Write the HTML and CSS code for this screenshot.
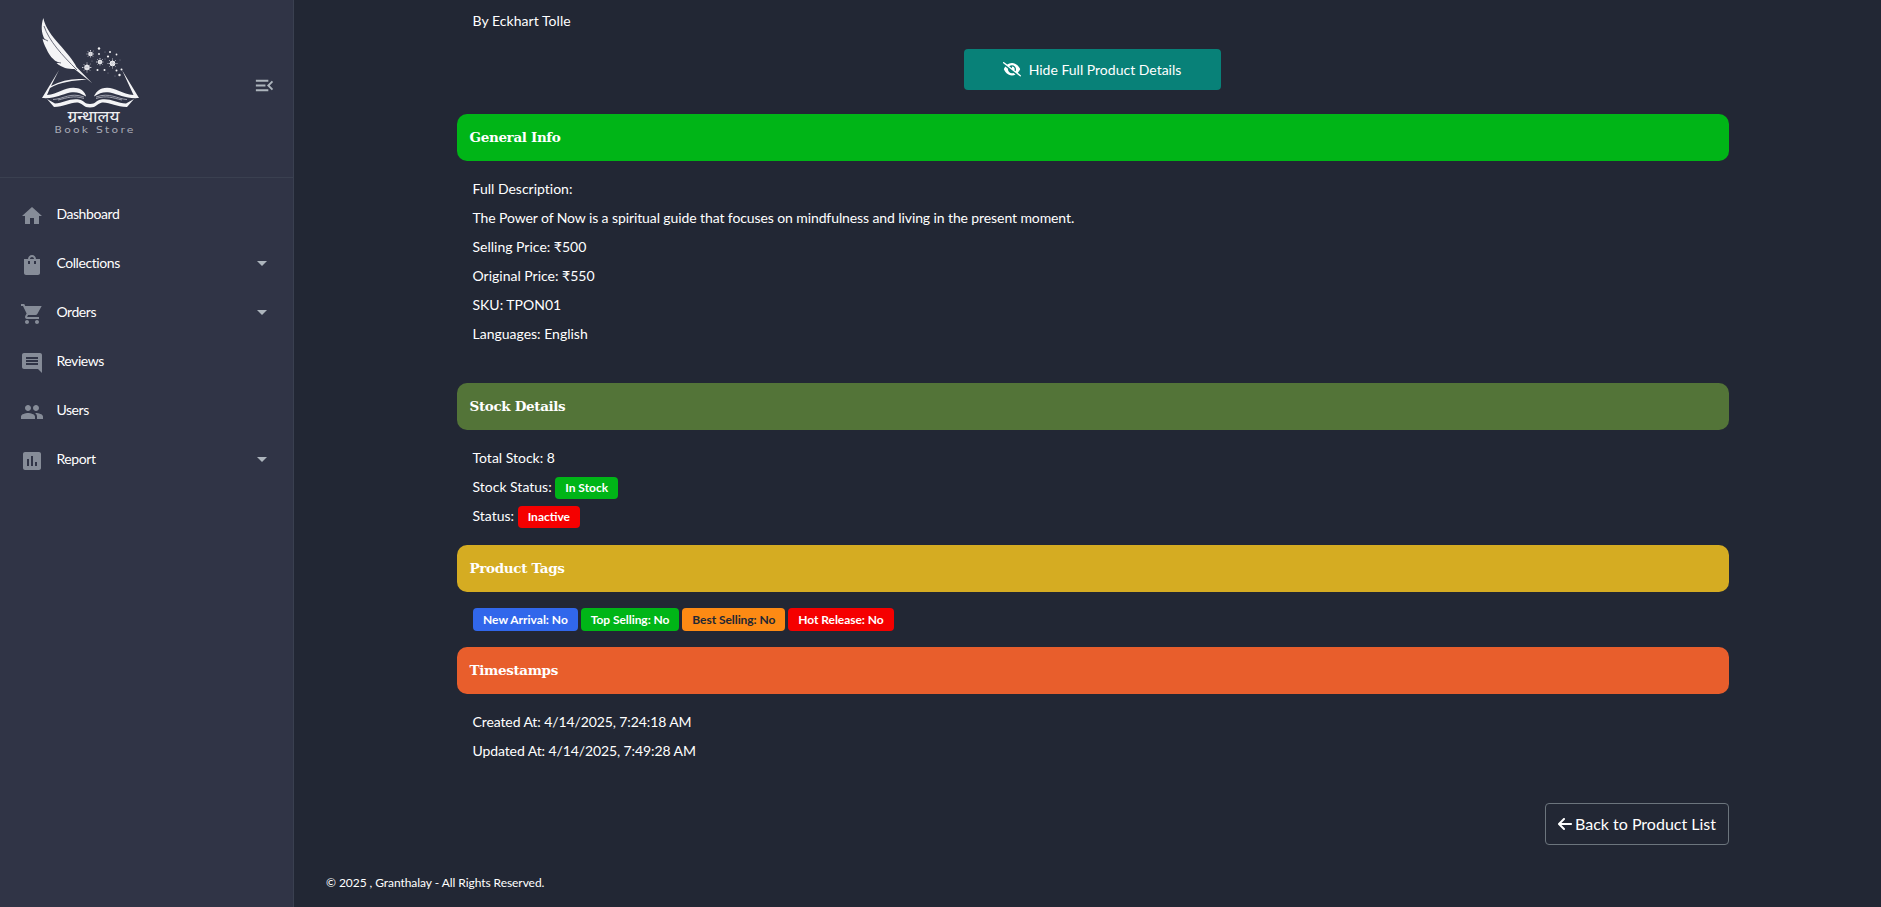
FILE: index.html
```html
<!DOCTYPE html>
<html lang="en">
<head>
<meta charset="utf-8">
<title>Granthalay - Product Details</title>
<link rel="stylesheet" href="styles.css">
</head>
<body>
<div class="app">
  <aside class="sidebar">
    <div class="brand">
      <svg class="logo" viewBox="30 10 120 130" width="120" height="130">
        <g fill="#f4f4f6">
          <path d="M43.3 18C45.5 28 52 36 59 44C67 53 73 60 76.500 67L92 83L74.500 69C68 69 62 68 56.500 63L59 63C53 60 49 55 46.500 49C44.500 45 43 42 42.500 38.500L45 40C41 33 41 25 43.300 18Z"/>
          <path d="M42 98L59 70L51 86C62 80 74 78 87 79.500C73 80.500 60 82 50 88L47 95C60 94 66 85 79 88.500C83 90 86 94 86 96.500C80 92.500 76 91.500 70 92.500C61 94.500 55 99 42 98Z"/>
          <path d="M139 98L122 70L133.500 95C120 94 113 85 102 88.500C97 90.500 95 94 94 96.500C100 92.500 104 91.500 110 92.500C119 94.500 126 99 139 98Z"/>
          <path d="M47 99L55 103.500C63 103 70 98 79 99.500C85 101 84 104 90 104C96 104 95 101 101 99.500C110 98 117 103 126 103.500L134 99L127 107C116 107 110 102 102 102.500C96 104 97 107.500 90 107.500C83 107.500 84 104 78 102.500C70 102 64 107 54 107Z"/>
        </g>
        <g fill="none" stroke="#b9bac5" stroke-width=".8">
          <path d="M53 99.500C64 99 70 92 84 97M58 100C67 98 73 95 84 98.500M127 99.500C117 99 110 92 96 97M122 100C113 98 107 95 96 98.500"/>
          <path stroke="#303446" stroke-width=".7" d="M44 26C49 41 62 55 77 70M42 38L48 41M56 62L61 63"/>
        </g>
        <g fill="#f4f4f6">
          <circle cx="90.500" cy="54" r="2.200"/><circle cx="87" cy="67.500" r="2.700"/><circle cx="100" cy="62" r="2.300"/><circle cx="112.500" cy="63.500" r="2.700"/>
          <circle cx="99" cy="48.500" r="1.200"/><circle cx="99" cy="54" r=".9"/><circle cx="110" cy="52" r="1"/><circle cx="116.500" cy="54.500" r=".9"/><circle cx="108" cy="56.500" r="1.100"/><circle cx="97.500" cy="70" r="1"/><circle cx="104.500" cy="70" r="1"/><circle cx="116.500" cy="70.500" r="1"/><circle cx="121.500" cy="69.500" r="1"/><circle cx="119.500" cy="75" r="1.200"/>
        </g>
        <g stroke="#c5c6cf" stroke-width="1" stroke-dasharray="1 .6">
          <path d="M90.500 50V58M86.500 54H94.500M87.500 51L93.500 57M93.500 51L87.500 57"/>
          <path d="M87 62.500V72.500M82 67.500H92M83.500 64L90.500 71M90.500 64L83.500 71"/>
          <path d="M100 58V66M96 62H104M97 59L103 65M103 59L97 65"/>
          <path d="M112.500 58.500V68.500M107.500 63.500H117.500M109 60L116 67M116 60L109 67"/>
        </g>
        <g fill="#8b8d9b"><circle cx="105" cy="52" r=".5"/><circle cx="92" cy="61" r=".5"/><circle cx="105" cy="59" r=".5"/><circle cx="108" cy="73" r=".5"/><circle cx="115" cy="76" r=".5"/><circle cx="120" cy="60" r=".5"/></g>
        <text class="logo-name" x="67.500" y="121.500" textLength="52" lengthAdjust="spacingAndGlyphs">ग्रन्थालय</text>
        <text class="logo-sub" transform="translate(54.500 132.500) scale(1.35 1)" textLength="58.500">Book Store</text>
      </svg>
      <svg class="toggle" viewBox="0 0 24 24" width="23" height="23"><path d="M3 18h13v-2H3v2zM3 13h10v-2H3v2zm0-7v2h13V6H3zm18 9.590L17.420 12 21 8.410 19.590 7l-5 5 5 5L21 15.590z"/></svg>
    </div>
    <nav class="menu">
      <a class="item"><svg viewBox="0 0 24 24"><path d="M10 20v-6h4v6h5v-8h3L12 3 2 12h3v8z"/></svg><span>Dashboard</span></a>
      <a class="item"><svg viewBox="0 0 24 24"><path d="M20 6h-4c0-2.210-1.790-4-4-4S8 3.790 8 6H4v14c0 1.100.9 2 2 2h12c1.100 0 2-.9 2-2V6zm-10 5H8V8h2v3zm0-5c0-1.100.9-2 2-2s2 .9 2 2h-4zm6 5h-2V8h2v3z"/></svg><span>Collections</span><i class="caret"></i></a>
      <a class="item"><svg viewBox="0 0 24 24"><path d="M7 18c-1.100 0-1.990.9-1.990 2S5.900 22 7 22s2-.9 2-2-.9-2-2-2zM1 2v2h2l3.600 7.590-1.350 2.450C4.520 15.370 5.480 17 7 17h12v-2H7.420c-.14 0-.25-.11-.25-.25l.9-1.750h7.480c.75 0 1.410-.41 1.750-1.030L21.700 4H5.210l-.94-2H1zm16 16c-1.100 0-1.990.9-1.990 2s.89 2 1.990 2 2-.9 2-2-.9-2-2-2z"/></svg><span>Orders</span><i class="caret"></i></a>
      <a class="item"><svg viewBox="0 0 24 24"><path d="M21.990 4c0-1.100-.89-2-1.990-2H4c-1.100 0-2 .9-2 2v12c0 1.100.9 2 2 2h14l4 4-.01-18zM18 14H6v-2h12v2zm0-3H6V9h12v2zm0-3H6V6h12v2z"/></svg><span>Reviews</span></a>
      <a class="item"><svg viewBox="0 0 24 24"><path d="M16 11c1.660 0 2.990-1.340 2.990-3S17.660 5 16 5s-3 1.340-3 3 1.340 3 3 3zm-8 0c1.660 0 2.990-1.340 2.990-3S9.660 5 8 5 5 6.340 5 8s1.340 3 3 3zm0 2c-2.330 0-7 1.170-7 3.500V19h14v-2.500C15 14.170 10.330 13 8 13zm8 0c-.29 0-.62.02-.97.05 1.160.84 1.970 1.970 1.970 3.450V19h6v-2.500c0-2.330-4.670-3.500-7-3.500z"/></svg><span>Users</span></a>
      <a class="item"><svg viewBox="0 0 24 24"><path d="M19 3H5c-1.100 0-2 .9-2 2v14c0 1.100.9 2 2 2h14c1.100 0 2-.9 2-2V5c0-1.100-.9-2-2-2zM9 17H7v-7h2v7zm4 0h-2V7h2v10zm4 0h-2v-4h2v4z"/></svg><span>Report</span><i class="caret"></i></a>
    </nav>
  </aside>
  <main class="main">
    <div class="product">
      <p class="author">By Eckhart Tolle</p>
      <button class="btn-hide"><svg viewBox="0 0 640 512" width="18" height="14.400"><path d="M38.800 5.100C28.400-3.100 13.300-1.200 5.100 9.200S-1.200 34.700 9.200 42.900l592 464c10.400 8.200 25.500 6.300 33.700-4.100s6.300-25.500-4.100-33.700L525.600 386.700c39.600-40.600 66.400-86.100 79.900-118.400c3.300-7.900 3.300-16.700 0-24.600c-14.900-35.700-46.200-87.700-93-131.100C465.500 68.800 400.800 32 320 32c-68.200 0-125 26.300-169.300 60.800L38.800 5.100zM223.100 149.500C248.600 126.200 282.700 112 320 112c79.500 0 144 64.500 144 144c0 24.900-6.300 48.300-17.400 68.700L408 294.500c8.400-19.300 10.600-41.400 4.800-63.300c-11.100-41.500-47.800-69.400-88.600-71.100c-5.800-.2-9.200 6.100-7.400 11.700c2.100 6.400 3.300 13.200 3.300 20.300c0 10.200-2.400 19.800-6.600 28.300l-90.300-70.800zM373 389.900c-16.400 6.500-34.300 10.100-53 10.100c-79.500 0-144-64.500-144-144c0-6.900 .5-13.600 1.400-20.200L83.100 161.500C60.300 191.200 44 220.800 34.500 243.700c-3.300 7.900-3.300 16.700 0 24.600c14.900 35.700 46.200 87.700 93 131.100C174.500 443.200 239.200 480 320 480c47.800 0 89.900-12.900 126.200-32.500L373 389.900z"/></svg><span>Hide Full Product Details</span></button>

      <h5 class="bar bar-green">General Info</h5>
      <div class="lines general">
        <p>Full Description:</p>
        <p class="description">The Power of Now is a spiritual guide that focuses on mindfulness and living in the present moment.</p>
        <p>Selling Price: ₹500</p>
        <p>Original Price: ₹550</p>
        <p>SKU: TPON01</p>
        <p>Languages: English</p>
      </div>

      <h5 class="bar bar-olive">Stock Details</h5>
      <div class="lines stock">
        <p>Total Stock: 8</p>
        <p>Stock Status: <span class="badge green">In Stock</span></p>
        <p>Status: <span class="badge red">Inactive</span></p>
      </div>

      <h5 class="bar bar-gold">Product Tags</h5>
      <div class="tags">
        <span class="badge blue">New Arrival: No</span>
        <span class="badge green">Top Selling: No</span>
        <span class="badge orange">Best Selling: No</span>
        <span class="badge red">Hot Release: No</span>
      </div>

      <h5 class="bar bar-coral">Timestamps</h5>
      <div class="lines stamps">
        <p>Created At: 4/14/2025, 7:24:18 AM</p>
        <p>Updated At: 4/14/2025, 7:49:28 AM</p>
      </div>

      <a class="btn-back"><svg viewBox="0 0 448 512" width="14" height="16"><path d="M9.400 233.400c-12.500 12.500-12.500 32.800 0 45.300l160 160c12.500 12.500 32.800 12.500 45.300 0s12.500-32.800 0-45.300L109.200 288 416 288c17.700 0 32-14.300 32-32s-14.300-32-32-32l-306.700 0L214.600 118.600c12.500-12.500 12.500-32.800 0-45.300s-32.800-12.500-45.300 0l-160 160z"/></svg><span>Back to Product List</span></a>
    </div>
    <footer class="footer">© 2025 , Granthalay - All Rights Reserved.</footer>
  </main>
</div>
</body>
</html>
```
FILE: styles.css
```css
* { box-sizing: border-box; }
html { height: 100%; overflow: hidden; background: #222734; }
body {
  margin: 0;
  height: 100%;
  overflow: hidden;
  background: #222734;
  color: #fff;
  font: 14px/24px Lato, sans-serif;
  font-variant-ligatures: none;
}
p, h5 { margin: 0; }
.app { display: flex; height: 100%; }

.sidebar {
  width: 294px;
  flex: none;
  background: #303446;
  border-right: 1px solid #3a4050;
}
.brand {
  height: 178px;
  padding: 10px 17px 0 30px;
  display: flex;
  justify-content: space-between;
  border-bottom: 1px solid #3a4050;
}
.logo-name { font: 15.500px "Noto Sans", "Noto Sans Devanagari", sans-serif; fill: #f0f0f3; }
.logo-sub { font: 8px "DejaVu Sans", sans-serif; fill: #a9abb7; }
.toggle { margin-top: 63.500px; fill: #adb5bd; }
.menu { padding: 12px 0 0; }
.item {
  height: 49px;
  padding: 0 26px 0 20px;
  display: flex;
  align-items: center;
}
.item svg { width: 24px; height: 24px; margin-top: 3px; fill: #868c98; }
.item span { margin: 0 0 2px 12.400px; letter-spacing: -.42px; }
.caret {
  margin-left: auto;
  border: 5px solid transparent;
  border-top-color: #adb5bd;
  border-bottom: 0;
}

.main { flex: 1; display: flex; flex-direction: column; }
.product {
  width: 1272px;
  margin-left: 163px;
  padding-top: 9px;
  display: flex;
  flex-direction: column;
}
.author { padding-left: 15.500px; letter-spacing: .05px; }
.btn-hide {
  align-self: center;
  width: 257px;
  height: 41px;
  margin: 16px 2px 24px 0;
  padding: 0;
  display: flex;
  align-items: center;
  justify-content: center;
  gap: 8px;
  border: 0;
  border-radius: 4px;
  background: #088178;
  color: #fff;
  font: 14px/24px Lato, sans-serif;
}
.btn-hide svg, .btn-back svg { fill: #fff; }
.bar {
  height: 47px;
  padding-left: 12.500px;
  border-radius: 10px;
  font: bold 13.500px/46px "DejaVu Serif", serif;
  letter-spacing: -.35px;
}
.bar-green { background: #00b517; }
.bar-olive { background: #537438; }
.bar-gold { background: #d5ac22; }
.bar-coral { background: #e85e2c; }
.lines {
  padding: 16px 15.500px 0;
  display: flex;
  flex-direction: column;
  gap: 5px;
}
.description { letter-spacing: -.1px; }
.general { height: 222px; }
.stock { height: 115px; }
.stamps { height: 109px; letter-spacing: -.1px; }
.badge {
  display: inline-block;
  height: 22px;
  padding: 0 10px;
  border-radius: 4px;
  font: bold 12px/22px Lato, sans-serif;
}
.blue { background: #3167eb; }
.green { background: #00b517; }
.orange { background: #fd8a14; color: #222734; }
.red { background: #f50000; }
.tags { height: 55px; padding: 16px 16px 0; display: flex; gap: 3px; }
.tags .badge { height: 23px; line-height: 23px; letter-spacing: -.06px; }
.tags .blue { letter-spacing: 0; }
.btn-back {
  align-self: flex-end;
  width: 184px;
  height: 42px;
  display: flex;
  align-items: center;
  justify-content: center;
  gap: 3px;
  border: 1px solid #6c757d;
  border-radius: 4px;
  font-size: 16px;
}
.footer { margin: 26px 0 0 32px; font-size: 12px; letter-spacing: -.06px; }
```
